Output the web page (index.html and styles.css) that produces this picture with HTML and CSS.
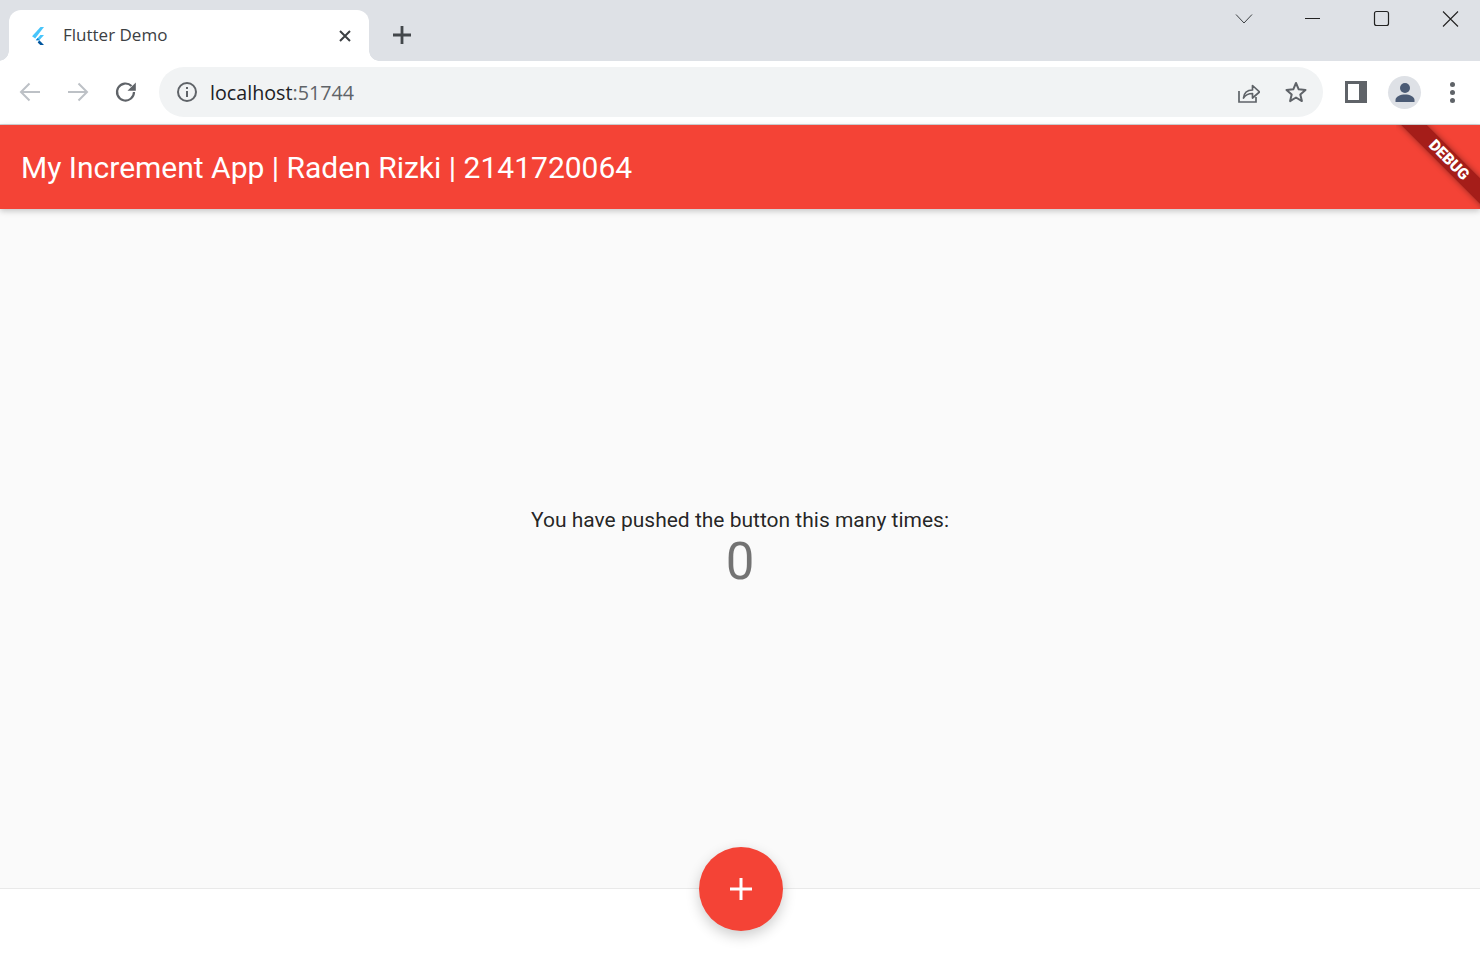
FILE: index.html
```html
<!DOCTYPE html>
<html lang="en">
<head>
  <meta charset="UTF-8">
  <meta name="viewport" content="width=device-width, initial-scale=1.0">
  <title>Flutter Demo</title>
  <link rel="stylesheet" href="styles.css">
</head>
<body>
  <div class="tabstrip">
    <div class="tab">
      <svg class="tab-logo" width="15" height="20" viewBox="0 0 18 20" preserveAspectRatio="none">
        <path d="M2.500 10.200 12.600 1h4.200L6.200 12.600z" fill="#47c5fb"/>
        <path d="M7 14.200 12.400 9h4.400l-5.600 5.300z" fill="#47c5fb"/>
        <path d="M7 14.200l2.200-2.100 2 2.200z" fill="#0a7ed6"/>
        <path d="M9.200 16.400l2-2.100 5.600 4.700h-4.400z" fill="#00569e"/>
      </svg>
      <span class="tab-title">Flutter Demo</span>
      <svg class="tab-close" width="14" height="14" viewBox="0 0 14 14">
        <path d="M2 2l10 10M12 2 2 12" stroke="#3c4043" stroke-width="2"/>
      </svg>
    </div>
    <svg class="new-tab" width="20" height="20" viewBox="0 0 20 20">
      <path d="M10 1v18M1 10h18" stroke="#43474b" stroke-width="2.800"/>
    </svg>
    <div class="window-controls">
      <svg class="win-btn" width="69" height="38" viewBox="-5 0 69 38">
        <path d="M27 14.500l8 8.500 8-8.500" fill="none" stroke="#3c4043" stroke-width="1"/>
      </svg>
      <svg class="win-btn" width="69" height="38" viewBox="-5 0 69 38">
        <path d="M27 18.500h15" stroke="#222" stroke-width="1"/>
      </svg>
      <svg class="win-btn" width="69" height="38" viewBox="-5 0 69 38">
        <rect x="27.500" y="11.500" width="14" height="14" rx="2" fill="none" stroke="#222" stroke-width="1.200"/>
      </svg>
      <svg class="win-btn" width="69" height="38" viewBox="-5 0 69 38">
        <path d="M27 11.500l15 15M42 11.500l-15 15" stroke="#222" stroke-width="1.100"/>
      </svg>
    </div>
  </div>

  <div class="toolbar">
    <svg class="nav-icon" width="24" height="24" viewBox="0 0 24 24">
      <path d="M22 12H3.500M11.500 3.500 3 12l8.500 8.500" fill="none" stroke="#bdc1c6" stroke-width="2"/>
    </svg>
    <svg class="nav-icon" width="24" height="24" viewBox="0 0 24 24">
      <path d="M2 12h18.500M12.500 3.500 21 12l-8.500 8.500" fill="none" stroke="#bdc1c6" stroke-width="2"/>
    </svg>
    <svg class="nav-icon" width="24" height="24" viewBox="0 0 24 24">
      <path d="M20 12a8.500 8.500 0 1 1-2.500-6" fill="none" stroke="#5f6368" stroke-width="2.200"/>
      <path d="M21.800 2.500v8.300h-8.300z" fill="#5f6368"/>
    </svg>
    <div class="omnibox">
      <svg class="info-icon" width="22" height="22" viewBox="0 0 22 22">
        <circle cx="11" cy="11" r="9" fill="none" stroke="#5f6368" stroke-width="2"/>
        <path d="M10 10h2v6h-2zM10 6h2v2h-2z" fill="#5f6368"/>
      </svg>
      <span class="url">localhost<span class="url-port">:51744</span></span>
      <svg class="share-icon" width="24" height="24" viewBox="0 0 24 24">
        <path d="M3 11v11h17v-5" fill="none" stroke="#5f6368" stroke-width="1.700"/>
        <path d="M7.500 18c.5-5 4-8 9-8V5.500l7 6.500-7 6v-4.500c-4 0-7 1.500-9 4.500z" fill="none" stroke="#5f6368" stroke-width="1.700" stroke-linejoin="round"/>
      </svg>
      <svg class="star-icon" width="24" height="24" viewBox="0 0 24 24">
        <path d="M12 3l2.700 6.300 6.800.6-5.200 4.500 1.600 6.700L12 17.500l-5.900 3.600 1.600-6.700-5.200-4.500 6.800-.6z" fill="none" stroke="#5f6368" stroke-width="2" stroke-linejoin="round"/>
      </svg>
    </div>
    <svg class="side-icon" width="22" height="22" viewBox="0 0 22 22">
      <path d="M0 0h22v22H0zM3 3v16h11V3z" fill="#5f6368" fill-rule="evenodd"/>
    </svg>
    <div class="avatar">
      <svg width="24" height="24" viewBox="0 0 24 24">
        <circle cx="12" cy="8" r="5" fill="#4b5b75"/>
        <path d="M2.500 22v-2c0-3.500 5-5.500 9.500-5.500s9.500 2 9.500 5.500v2z" fill="#4b5b75"/>
      </svg>
    </div>
    <div class="menu-dots"><i></i><i></i><i></i></div>
  </div>

  <div class="app">
    <header class="app-bar">
      <h1 class="app-title">My Increment App | Raden Rizki | 2141720064</h1>
      <div class="debug-corner"><div class="debug-ribbon">DEBUG</div></div>
    </header>
    <main class="app-body">
      <p class="counter-label">You have pushed the button this many times:</p>
      <p class="counter-value">0</p>
    </main>
    <footer class="app-foot"></footer>
    <button class="fab" type="button" aria-label="Increment">
      <svg width="22" height="22" viewBox="0 0 22 22">
        <path d="M11 0v22M0 11h22" stroke="#fff" stroke-width="3"/>
      </svg>
    </button>
  </div>
</body>
</html>
```

FILE: styles.css
```css
html, body {
  margin: 0;
  height: 100%;
}
body {
  width: 1480px;
  height: 958px;
  overflow: hidden;
  display: flex;
  flex-direction: column;
  background-color: white;
  font-family: "Open Sans", sans-serif;
}

/* tab strip */
.tabstrip {
  height: 61px;
  flex: none;
  display: flex;
  align-items: flex-start;
  background-color: #dee1e6;
  position: relative;
}
.tab {
  width: 360px;
  height: 51px;
  margin: 10px 0 0 9px;
  box-sizing: border-box;
  padding: 0 17px 0 21px;
  display: flex;
  align-items: center;
  background-color: white;
  border-radius: 12px 12px 0 0;
  position: relative;
}
.tab::before, .tab::after {
  content: "";
  position: absolute;
  bottom: 0;
  width: 10px;
  height: 10px;
}
.tab::before {
  left: -10px;
  background: radial-gradient(circle at 0 0, #dee1e6 9.500px, white 10px);
}
.tab::after {
  right: -10px;
  background: radial-gradient(circle at 100% 0, #dee1e6 9.500px, white 10px);
}
.tab-logo {
  flex: none;
  margin-right: 18px;
}
.tab-title {
  flex: 1;
  margin-top: -2px;
  font-size: 17px;
  color: #3c4043;
}
.tab-close {
  flex: none;
}
.new-tab {
  margin: 25px 0 0 23px;
}
.window-controls {
  margin-left: auto;
  display: flex;
}
.win-btn {
  display: block;
}

/* toolbar */
.toolbar {
  height: 64px;
  flex: none;
  box-sizing: border-box;
  padding: 6px 0 7px 18px;
  display: flex;
  align-items: center;
  background-color: white;
  border-bottom: 1px solid #d2d4d7;
}
.nav-icon {
  flex: none;
  margin-right: 24px;
}
.omnibox {
  width: 1164px;
  height: 50px;
  margin-left: -3px;
  box-sizing: border-box;
  padding: 0 15px 0 17px;
  display: flex;
  align-items: center;
  background-color: #f1f3f4;
  border-radius: 25px;
}
.info-icon {
  flex: none;
  margin-right: 12px;
}
.url {
  flex: 1;
  font-size: 19.700px;
  color: #202124;
}
.url-port {
  color: #5f6368;
}
.share-icon {
  margin-right: 24px;
}
.side-icon {
  margin-left: 22px;
}
.avatar {
  width: 33px;
  height: 33px;
  margin-left: 21px;
  display: flex;
  align-items: center;
  justify-content: center;
  background-color: #dee1e6;
  border-radius: 50%;
}
.menu-dots {
  margin-left: 29px;
  display: flex;
  flex-direction: column;
  gap: 3px;
}
.menu-dots i {
  display: block;
  width: 5px;
  height: 5px;
  background-color: #5f6368;
  border-radius: 50%;
}

/* flutter page */
.app {
  flex: 1;
  display: flex;
  flex-direction: column;
  position: relative;
  font-family: Roboto, sans-serif;
}
.app-bar {
  height: 84px;
  flex: none;
  box-sizing: border-box;
  padding-left: 21px;
  display: flex;
  align-items: center;
  background-color: #f44336;
  box-shadow: 0 2px 6px rgba(0, 0, 0, 0.22);
  position: relative;
  z-index: 1;
}
.app-title {
  margin: 0;
  font-size: 30px;
  font-weight: 400;
  color: white;
}
.debug-corner {
  position: absolute;
  top: 0;
  right: 0;
  width: 84px;
  height: 84px;
  overflow: hidden;
}
.debug-ribbon {
  position: absolute;
  top: 26px;
  right: -39px;
  width: 140px;
  height: 18px;
  line-height: 18px;
  transform: rotate(45deg);
  background-color: #a51d19;
  box-shadow: 0 0 6px rgba(0, 0, 0, 0.4);
  font-size: 15.500px;
  font-weight: 900;
  text-align: center;
  color: white;
}
.app-body {
  height: 677px;
  flex: none;
  padding-bottom: 2px;
  display: flex;
  flex-direction: column;
  align-items: center;
  justify-content: center;
  background-color: #fafafa;
  border-bottom: 1px solid #e9e9e9;
}
.counter-label {
  margin: 0;
  font-size: 21px;
  line-height: 28px;
  color: rgba(0, 0, 0, 0.87);
}
.counter-value {
  margin: 0;
  font-size: 51px;
  line-height: 56px;
  color: rgba(0, 0, 0, 0.54);
}
.app-foot {
  flex: 1;
  background-color: white;
}
.fab {
  position: absolute;
  left: 699px;
  top: 722px;
  width: 84px;
  height: 84px;
  padding: 0;
  display: flex;
  align-items: center;
  justify-content: center;
  background-color: #f44336;
  border: none;
  border-radius: 50%;
  box-shadow: 0 5px 14px rgba(0, 0, 0, 0.2);
}
```
